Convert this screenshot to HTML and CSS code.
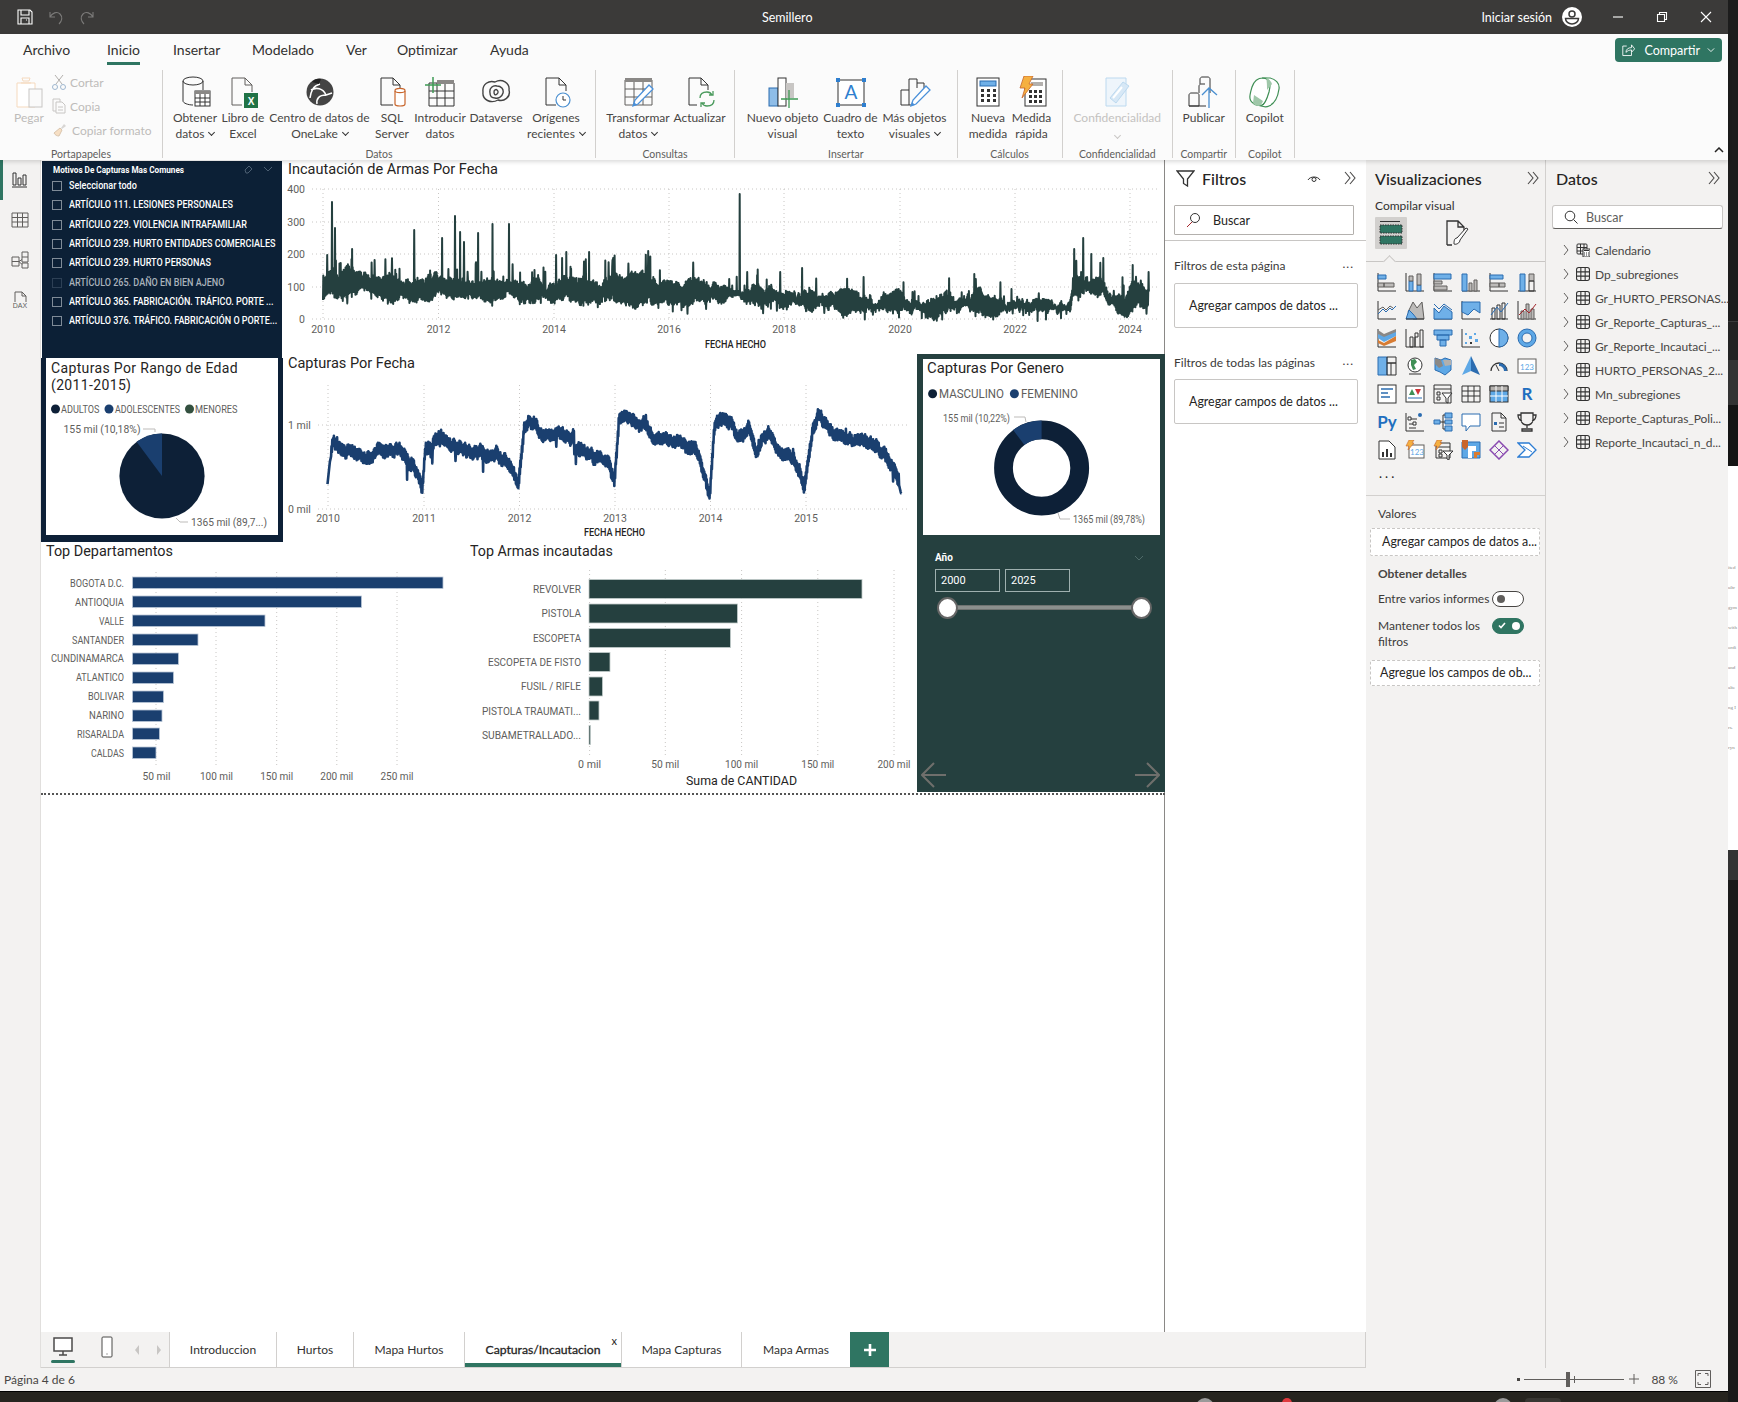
FILE: index.html
```html
<!DOCTYPE html>
<html lang="es">
<head>
<meta charset="utf-8">
<title>Semillero</title>
<link rel="stylesheet" href="styles.css">
</head>
<body>
<div class="app">
  <header class="titlebar">
    <div class="qat">
      <svg width="16" height="16" viewBox="0 0 16 16"><path class="tw" d="M1 1h12l2 2v12H1z M4 1v5h8V1 M4 15v-6h8v6 M9 11h1"/></svg>
      <svg width="16" height="16" viewBox="0 0 16 16"><path class="td" d="M2 3v5h5 M2 8c2-4 7-6 10-3s2 7-1 10"/></svg>
      <svg width="16" height="16" viewBox="0 0 16 16"><path class="td" d="M14 3v5H9 M14 8c-2-4-7-6-10-3s-2 7 1 10"/></svg>
    </div>
    <div class="doc-title">Semillero</div>
    <div class="signin">Iniciar sesión</div>
    <svg class="avatar" width="20" height="20" viewBox="0 0 20 20"><circle cx="10" cy="10" r="10" fill="#fff"/><circle cx="10" cy="7" r="3" fill="none" stroke="#3b3a39" stroke-width="1.5"/><path d="M3.500 11.500h13c0 3-3 5.500-6.500 5.500s-6.500-2.500-6.500-5.500z" fill="none" stroke="#3b3a39" stroke-width="1.500"/></svg>
    <div class="winctl">
      <svg width="12" height="12" viewBox="0 0 12 12"><path class="tw" d="M1 6h10"/></svg>
      <svg width="12" height="12" viewBox="0 0 12 12"><path class="tw" d="M1.500 3.500h7v7h-7z M3.500 3.500v-2h7v7h-2"/></svg>
      <svg width="12" height="12" viewBox="0 0 12 12"><path class="tw" d="M1 1l10 10 M11 1L1 11"/></svg>
    </div>
  </header>

  <section class="ribbon">
    <nav class="menu">
      <span class="m-archivo">Archivo</span>
      <span class="m-inicio active">Inicio</span>
      <span class="m-insertar">Insertar</span>
      <span class="m-modelado">Modelado</span>
      <span class="m-ver">Ver</span>
      <span class="m-optimizar">Optimizar</span>
      <span class="m-ayuda">Ayuda</span>
      <button class="share">
        <svg width="17" height="16" viewBox="0 0 17 16"><path class="tw" d="M6 3H1v12h11v-4 M5 11c0-4 3-6 7-6V1.500l4 5-4 4.500V8c-3 0-5 1-7 3z"/></svg>
        Compartir
        <svg width="10" height="6" viewBox="0 0 10 6"><path class="tw" d="M1 1l4 4 4-4"/></svg>
      </button>
    </nav>
    <div class="groups">
      <div class="rgroup g-clip">
        <div class="rbody clip-body">
          <div class="pegar">
            <svg width="28" height="32" viewBox="0 0 28 32"><path d="M2 7h18v24H2z" fill="#fff" stroke="#f5d9bd"/><path d="M8 5h6l1-3H7z M6 7h10" fill="none" stroke="#f5d9bd"/><rect x="14" y="13" width="13" height="18" fill="#fafafa" stroke="#c8c6c4"/></svg>
            <span>Pegar</span>
          </div>
          <ul class="clip-list">
            <li><svg width="14" height="16" viewBox="0 0 14 16"><path d="M3 1l7 9 M11 1L4 10" fill="none" stroke="#b3b0ad"/><circle cx="3" cy="13" r="2.500" fill="none" stroke="#9fb7cf"/><circle cx="11" cy="13" r="2.500" fill="none" stroke="#9fb7cf"/></svg>Cortar</li>
            <li><svg width="14" height="16" viewBox="0 0 14 16"><path d="M1 1h7v3 M1 1v12h3 M4 4h6l3 3v8H4z M6 9h5 M6 12h5" fill="none" stroke="#c8c6c4"/></svg>Copia</li>
            <li><svg width="16" height="16" viewBox="0 0 16 16"><path d="M9 6l3-4 2 2-4 3z" fill="#d8d6d4"/><path d="M2 11l6-5 2 2-3 6c-2 0-4-1-5-3z" fill="#f7dfc4" stroke="#d9c5ae"/></svg>Copiar formato</li>
          </ul>
        </div>
        <div class="rlabel">Portapapeles</div>
      </div>

      <div class="rgroup g-datos">
        <div class="rbody">
          <div class="ritem"><svg width="32" height="32" viewBox="0 0 32 32"><path class="s" d="M4 5v20c0 2 5 4 10 4 M24 5v9"/><ellipse class="s" cx="14" cy="5" rx="10" ry="4"/><rect x="16" y="15" width="15" height="15" fill="#fff" stroke="#333"/><path d="M16 15h15v3H16z" fill="#8a8886"/><path class="s" d="M21 18v12 M26 18v12 M16 22h15 M16 26h15"/></svg><span>Obtener<br>datos <i class="chev"></i></span></div>
          <div class="ritem"><svg width="32" height="32" viewBox="0 0 32 32"><path class="g1" d="M5 29V2h13l7 7v7 M18 2v7h7 M5 29h10"/><rect x="17" y="17" width="14" height="15" fill="#217346"/><text class="xl" x="24" y="29">X</text></svg><span>Libro de<br>Excel</span></div>
          <div class="ritem"><svg width="32" height="32" viewBox="0 0 32 32"><circle cx="16" cy="16" r="13.500" fill="#444"/><path d="M6 22c1-7 3-12 10-14 M7 14c5-3 12-2 15 5l6-2 M13 28c-1-5 2-9 9-9" fill="none" stroke="#fff" stroke-width="1.500"/><path d="M8 6c2-3 6-4 9-3l-2 5z" fill="#222"/></svg><span>Centro de datos de<br>OneLake <i class="chev"></i></span></div>
          <div class="ritem"><svg width="32" height="32" viewBox="0 0 32 32"><path class="s" d="M5 29V2h12l7 7v3 M17 2v7h7 M5 29h12"/><path d="M19 15v13c0 1 2 2 5 2s5-1 5-2V15" fill="#fff" stroke="#c8652b" stroke-width="1.200"/><ellipse cx="24" cy="14.500" rx="5" ry="2.200" fill="#fff" stroke="#c8652b" stroke-width="1.200"/></svg><span>SQL<br>Server</span></div>
          <div class="ritem"><svg width="32" height="32" viewBox="0 0 32 32"><path class="s" d="M5 7h25v23H5z M5 15h25 M5 22h25 M13 7v23 M21 7v23"/><path d="M13 4h17v4H13z" fill="#8a8886"/><path d="M9 1v16 M1 9h16" stroke="#3f9a55" stroke-width="1.500"/></svg><span>Introducir<br>datos</span></div>
          <div class="ritem"><svg width="32" height="32" viewBox="0 0 32 32"><path class="g2" d="M3 16C2 8 9 4 15 6c7-4 15 1 14 8 2 7-5 12-11 10-7 4-16 0-15-8z M10 17c-1-5 3-8 7-7 4 0 7 3 6 7-1 4-5 6-8 5-3 0-5-2-5-5z M14 16c0-2 2-3 3-2s2 2 0 4-3 0-3-2z"/></svg><span>Dataverse</span></div>
          <div class="ritem"><svg width="32" height="32" viewBox="0 0 32 32"><path class="s" d="M6 29V2h13l7 7v6 M19 2v7h7 M6 29h10"/><circle cx="23" cy="24" r="7" fill="#fff" stroke="#4a8fd0" stroke-width="1.200"/><path d="M23 20v4h3" fill="none" stroke="#333"/></svg><span>Orígenes<br>recientes <i class="chev"></i></span></div>
        </div>
        <div class="rlabel">Datos</div>
      </div>

      <div class="rgroup g-consultas">
        <div class="rbody">
          <div class="ritem"><svg width="32" height="32" viewBox="0 0 32 32"><path class="g1" d="M3 4h27v25H3z M3 13h27 M3 21h27 M12 4v25 M21 4v25"/><path d="M3 2h27v4H3z" fill="#8a8886"/><path d="M11 30l2-6 14-15 4 4-15 15z" fill="#fff" stroke="#4a90d9" stroke-width="1.300"/><path d="M11 30l1-4 3 3z" fill="#4a90d9"/></svg><span>Transformar<br>datos <i class="chev"></i></span></div>
          <div class="ritem"><svg width="32" height="32" viewBox="0 0 32 32"><path class="s" d="M5 29V2h12l7 7v5 M17 2v7h7 M5 29h8"/><path d="M16 22c0-4 3-6 7-6 2 0 4 1 5 3 M30 24c0 4-3 6-7 6-2 0-4-1-5-3 M29 15v4h-4 M17 31v-4h4" fill="none" stroke="#4a9a5c" stroke-width="1.300"/></svg><span>Actualizar</span></div>
        </div>
        <div class="rlabel">Consultas</div>
      </div>

      <div class="rgroup g-insertar">
        <div class="rbody">
          <div class="ritem"><svg width="32" height="32" viewBox="0 0 32 32"><rect x="2" y="12" width="9" height="18" fill="#8ebde8" stroke="#2b6cb0"/><rect x="11" y="2" width="8" height="28" fill="#fff" stroke="#333"/><rect x="19" y="7" width="8" height="15" fill="#c8c6c4"/><path d="M22 14v18 M14 23h17" stroke="#3f9a55" stroke-width="1.300"/></svg><span>Nuevo objeto<br>visual</span></div>
          <div class="ritem"><svg width="32" height="32" viewBox="0 0 32 32"><rect x="3" y="4" width="26" height="25" fill="#fff" stroke="#333"/><path d="M1 2h4v4H1z M27 2h4v4h-4z M1 27h4v4H1z M27 27h4v4h-4z" fill="#2f7fcf"/><text class="bigA" x="16" y="23">A</text></svg><span>Cuadro de<br>texto</span></div>
          <div class="ritem"><svg width="32" height="32" viewBox="0 0 32 32"><path class="s" d="M2 29V14h8 M10 29V3h8v9 M18 7h7v5 M2 29h10"/><path d="M12 30l2-6 13-14 4 4-14 14z" fill="#fff" stroke="#4a90d9" stroke-width="1.300"/><path d="M12 30l1-4 3 3z" fill="#4a90d9"/></svg><span>Más objetos<br>visuales <i class="chev"></i></span></div>
        </div>
        <div class="rlabel">Insertar</div>
      </div>

      <div class="rgroup g-calc">
        <div class="rbody">
          <div class="ritem"><svg width="32" height="32" viewBox="0 0 32 32"><rect x="5" y="2" width="22" height="28" fill="#fff" stroke="#333"/><rect x="8" y="5" width="16" height="5" fill="#6fb0e8" stroke="#2b6cb0"/><path d="M9 13h3v3H9z M15 13h3v3h-3z M21 13h3v3h-3z M9 18h3v3H9z M15 18h3v3h-3z M21 18h3v3h-3z M9 23h3v3H9z M15 23h3v3h-3z M21 23h3v3h-3z" fill="#333"/></svg><span>Nueva<br>medida</span></div>
          <div class="ritem"><svg width="32" height="32" viewBox="0 0 32 32"><rect x="9" y="3" width="21" height="27" fill="#fff" stroke="#333"/><rect x="15" y="6" width="12" height="4" fill="#b3b0ad"/><path d="M13 14h3v3h-3z M18 14h3v3h-3z M23 14h3v3h-3z M13 19h3v3h-3z M18 19h3v3h-3z M23 19h3v3h-3z M13 24h3v3h-3z M18 24h3v3h-3z M23 24h3v3h-3z" fill="#333"/><path d="M8 0h9l-4 8h4L6 22l3-10H4z" fill="#f5b041" stroke="#c8652b" stroke-width=".8"/></svg><span>Medida<br>rápida</span></div>
        </div>
        <div class="rlabel">Cálculos</div>
      </div>

      <div class="rgroup g-conf">
        <div class="rbody">
          <div class="ritem dim"><svg width="32" height="32" viewBox="0 0 32 32"><path d="M5 2h20v28H5z" fill="#eef5fb" stroke="#bcd9ef"/><path d="M9 22L22 6l6 4-13 17z" fill="#d7e8f6" stroke="#bcd9ef"/><path d="M12 22l9-11" stroke="#fff" stroke-width="2"/></svg><span>Confidencialidad<br><i class="chev light"></i></span></div>
        </div>
        <div class="rlabel">Confidencialidad</div>
      </div>

      <div class="rgroup g-comp">
        <div class="rbody">
          <div class="ritem"><svg width="32" height="32" viewBox="0 0 32 32"><path class="s" d="M1 30V19c0-1 1-2 2-2h6c1 0 2 1 2 2v11z M11 17V10c0-1 1-2 2-2h4M12 8V3c0-1 1-2 2-2h6c1 0 2 1 2 2v14 M1 30h17"/><path d="M21 32V12 M14 19l7-7 8 7" fill="none" stroke="#4a8fd0" stroke-width="1.300"/></svg><span>Publicar</span></div>
        </div>
        <div class="rlabel">Compartir</div>
      </div>

      <div class="rgroup g-copilot">
        <div class="rbody">
          <div class="ritem"><svg width="34" height="32" viewBox="0 0 34 32"><path d="M15 2c-6 0-9 3-11 9-2 7-4 13 1 16 2 2 6 3 9 2 4-1 6-7 8-13 1-4 2-9 0-12-1-2-4-2-7-2z" fill="#fff" stroke="#3f8f55" stroke-width="1.200"/><path d="M14 2h8c5 1 10 5 9 11-1 7-3 14-10 17-2 1-5 1-8 0 4-1 6-7 8-14 1-4 2-10-1-12-2-2-4-2-6-2z" fill="#fff" stroke="#3f8f55" stroke-width="1.200"/><path d="M18 2c3 1 5 3 6 6l-5 6c0-4 0-9-1-12z M5 27l1-8 9 6c-1 3-3 5-5 5-2-1-4-1-5-3z" fill="#9fc7a9"/></svg><span>Copilot</span></div>
        </div>
        <div class="rlabel">Copilot</div>
      </div>
    </div>
    <svg class="collapse" width="10" height="6" viewBox="0 0 10 6"><path d="M1 5l4-4 4 4" fill="none" stroke="#252423" stroke-width="1.500"/></svg>
  </section>

  <main class="main">
    <aside class="rail">
      <div class="rail-item on"><svg width="18" height="16" viewBox="0 0 18 16"><path class="s" d="M1 15h15 M2 13V1h3v12z M7 13V6h3v7z M12 13V3h3v10z"/></svg></div>
      <div class="rail-item"><svg width="18" height="16" viewBox="0 0 18 16"><path class="g1" d="M1 1h16v14H1z M1 5.500h16 M1 10h16 M6.500 1v14 M11.500 1v14"/></svg></div>
      <div class="rail-item"><svg width="18" height="18" viewBox="0 0 18 18"><path class="g1" d="M1 6h7v9H1z M1 10.500h7 M8 10.500l3-2 M11 1h6v5h-6z M11 6v5h6V6 M11 12h6v5h-6z M8 10.500l3 3"/></svg></div>
      <div class="rail-item"><svg width="18" height="19" viewBox="0 0 18 19"><path class="g1" d="M4 11V1h7l4 4v6 M11 1v4h4"/><text class="dax" x="9" y="17">DAX</text></svg></div>
    </aside>

    <div class="center">
      <div class="work">
        <div class="canvas">
          <section class="visual v-slicer">
            <h3 class="sl-title">Motivos De Capturas Mas Comunes</h3>
            <svg class="sl-tools" width="34" height="10" viewBox="0 0 34 10"><path d="M2 6l4-4 3 3-4 4H3z M21 3l4 4 4-4" fill="none" stroke="#4c5f72"/></svg>
            <ul class="sl-list">
              <li><i></i><span>Seleccionar todo</span></li>
              <li><i></i><span>ARTÍCULO 111. LESIONES PERSONALES</span></li>
              <li><i></i><span>ARTÍCULO 229. VIOLENCIA INTRAFAMILIAR</span></li>
              <li><i></i><span>ARTÍCULO 239. HURTO ENTIDADES COMERCIALES</span></li>
              <li><i></i><span>ARTÍCULO 239. HURTO PERSONAS</span></li>
              <li class="off"><i></i><span>ARTÍCULO 265. DAÑO EN BIEN AJENO</span></li>
              <li><i></i><span>ARTÍCULO 365. FABRICACIÓN. TRÁFICO. PORTE ...</span></li>
              <li><i></i><span>ARTÍCULO 376. TRÁFICO. FABRICACIÓN O PORTE...</span></li>
            </ul>
          </section>

          <svg class="visual v-line1" viewBox="287 160 878 195" width="878" height="195">
            <text class="vt" x="288" y="174" textLength="210" lengthAdjust="spacingAndGlyphs">Incautación de Armas Por Fecha</text>
            <g class="grid">
              <path d="M312 189H1158 M312 222H1158 M312 254H1158 M312 287H1158 M312 319H1158"/>
              <path d="M323 189V319 M438.500 189V319 M554 189V319 M669 189V319 M784 189V319 M900 189V319 M1015 189V319 M1130 189V319"/>
            </g>
            <g class="ax end">
              <text x="305" y="193">400</text><text x="305" y="226">300</text><text x="305" y="258">200</text><text x="305" y="291">100</text><text x="305" y="323">0</text>
            </g>
            <g class="ax mid">
              <text x="323" y="333">2010</text><text x="438.500" y="333">2012</text><text x="554" y="333">2014</text><text x="669" y="333">2016</text><text x="784" y="333">2018</text><text x="900" y="333">2020</text><text x="1015" y="333">2022</text><text x="1130" y="333">2024</text>
            </g>
            <path id="series1" class="line1" d=""/>
            <text class="axt" x="705" y="348" textLength="61" lengthAdjust="spacingAndGlyphs">FECHA HECHO</text>
          </svg>

          <section class="visual v-pie">
            <h3 class="vt-html">Capturas Por Rango de Edad<br>(2011-2015)</h3>
            <svg class="pie-svg" viewBox="46 358 232 177" width="232" height="177">
              <circle cx="55.500" cy="409" r="4.500" fill="#0d2037"/><text class="lg" x="61" y="413" textLength="38.500" lengthAdjust="spacingAndGlyphs">ADULTOS</text>
              <circle cx="109" cy="409" r="4.500" fill="#1a3f6f"/><text class="lg" x="115" y="413" textLength="65" lengthAdjust="spacingAndGlyphs">ADOLESCENTES</text>
              <circle cx="189.500" cy="409" r="4.500" fill="#33503f"/><text class="lg" x="195" y="413" textLength="42.500" lengthAdjust="spacingAndGlyphs">MENORES</text>
              <text class="lb" x="63.500" y="433" textLength="77" lengthAdjust="spacingAndGlyphs">155 mil (10,18%)</text>
              <path class="lead" d="M143 429h12v3"/>
              <circle cx="162" cy="476" r="42.600" fill="#0d2037"/>
              <path d="M162 476V433.400A42.600 42.600 0 0 0 136.600 441.800Z" fill="#1a3f6f"/>
              <path class="lead" d="M176 518l4 4h8"/>
              <text class="lb" x="191" y="526" textLength="76" lengthAdjust="spacingAndGlyphs">1365 mil (89,7...)</text>
            </svg>
          </section>

          <svg class="visual v-line2" viewBox="287 355 630 190" width="630" height="190">
            <text class="vt" x="288" y="368" textLength="127" lengthAdjust="spacingAndGlyphs">Capturas Por Fecha</text>
            <g class="grid">
              <path d="M318 425H908 M318 509H908"/>
              <path d="M328 385V509 M424 385V509 M519.500 385V509 M615 385V509 M710.500 385V509 M806 385V509"/>
            </g>
            <g class="ax">
              <text x="288" y="429">1 mil</text><text x="288" y="513">0 mil</text>
            </g>
            <g class="ax mid">
              <text x="328" y="522">2010</text><text x="424" y="522">2011</text><text x="519.500" y="522">2012</text><text x="615" y="522">2013</text><text x="710.500" y="522">2014</text><text x="806" y="522">2015</text>
            </g>
            <path id="series2" class="line2" d=""/>
            <text class="axt" x="584" y="536" textLength="61" lengthAdjust="spacingAndGlyphs">FECHA HECHO</text>
          </svg>

          <section class="visual v-bar1">
            <svg viewBox="41 542 419 251" width="419" height="251">
              <text class="vt" x="46" y="556" textLength="127" lengthAdjust="spacingAndGlyphs">Top Departamentos</text>
              <path class="grid-p" d="M156 572V768 M216 572V768 M276.700 572V768 M336.800 572V768 M397 572V768"/>
              <g class="bars1">
                <rect x="132.500" y="577" width="310.500" height="11.500"/><rect x="132.500" y="596" width="229" height="11.500"/><rect x="132.500" y="615" width="132.500" height="11.500"/><rect x="132.500" y="634" width="65.500" height="11.500"/><rect x="132.500" y="653" width="46" height="11.500"/><rect x="132.500" y="672" width="41" height="11.500"/><rect x="132.500" y="691" width="31" height="11.500"/><rect x="132.500" y="710" width="29.500" height="11.500"/><rect x="132.500" y="728" width="27" height="11.500"/><rect x="132.500" y="747" width="23.500" height="11.500"/>
              </g>
              <g class="ax end">
                <text x="124" y="587" textLength="54" lengthAdjust="spacingAndGlyphs">BOGOTA D.C.</text><text x="124" y="606" textLength="49" lengthAdjust="spacingAndGlyphs">ANTIOQUIA</text><text x="124" y="625" textLength="25" lengthAdjust="spacingAndGlyphs">VALLE</text><text x="124" y="644" textLength="52" lengthAdjust="spacingAndGlyphs">SANTANDER</text><text x="124" y="662" textLength="73" lengthAdjust="spacingAndGlyphs">CUNDINAMARCA</text><text x="124" y="681" textLength="48" lengthAdjust="spacingAndGlyphs">ATLANTICO</text><text x="124" y="700" textLength="36" lengthAdjust="spacingAndGlyphs">BOLIVAR</text><text x="124" y="719" textLength="35" lengthAdjust="spacingAndGlyphs">NARINO</text><text x="124" y="738" textLength="47" lengthAdjust="spacingAndGlyphs">RISARALDA</text><text x="124" y="757" textLength="33" lengthAdjust="spacingAndGlyphs">CALDAS</text>
              </g>
              <g class="ax mid">
                <text x="156.500" y="780" textLength="28" lengthAdjust="spacingAndGlyphs">50 mil</text><text x="216.500" y="780" textLength="33" lengthAdjust="spacingAndGlyphs">100 mil</text><text x="276.700" y="780" textLength="33" lengthAdjust="spacingAndGlyphs">150 mil</text><text x="336.800" y="780" textLength="33" lengthAdjust="spacingAndGlyphs">200 mil</text><text x="397" y="780" textLength="33" lengthAdjust="spacingAndGlyphs">250 mil</text>
              </g>
            </svg>
          </section>

          <section class="visual v-bar2">
            <svg viewBox="460 542 457 251" width="457" height="251">
              <text class="vt" x="470" y="556" textLength="143" lengthAdjust="spacingAndGlyphs">Top Armas incautadas</text>
              <path class="grid-p" d="M589.600 570V755 M665.300 570V755 M741.600 570V755 M817.800 570V755 M894 570V755"/>
              <g class="bars2">
                <rect x="589" y="579.500" width="273" height="19"/><rect x="589" y="604" width="148.500" height="19"/><rect x="589" y="628.500" width="141.500" height="19"/><rect x="589" y="652.500" width="21" height="19"/><rect x="589" y="677" width="13.500" height="19"/><rect x="589" y="701" width="10" height="19"/><rect x="589" y="725.500" width="1.500" height="19"/>
              </g>
              <g class="ax end">
                <text x="581" y="593" textLength="48" lengthAdjust="spacingAndGlyphs">REVOLVER</text><text x="581" y="617" textLength="39.500" lengthAdjust="spacingAndGlyphs">PISTOLA</text><text x="581" y="642" textLength="48" lengthAdjust="spacingAndGlyphs">ESCOPETA</text><text x="581" y="666" textLength="93" lengthAdjust="spacingAndGlyphs">ESCOPETA DE FISTO</text><text x="581" y="690" textLength="60" lengthAdjust="spacingAndGlyphs">FUSIL / RIFLE</text><text x="581" y="715" textLength="99" lengthAdjust="spacingAndGlyphs">PISTOLA TRAUMATI...</text><text x="581" y="739" textLength="99" lengthAdjust="spacingAndGlyphs">SUBAMETRALLADO...</text>
              </g>
              <g class="ax mid">
                <text x="589.600" y="768" textLength="23" lengthAdjust="spacingAndGlyphs">0 mil</text><text x="665.300" y="768" textLength="28" lengthAdjust="spacingAndGlyphs">50 mil</text><text x="741.600" y="768" textLength="33" lengthAdjust="spacingAndGlyphs">100 mil</text><text x="817.800" y="768" textLength="33" lengthAdjust="spacingAndGlyphs">150 mil</text><text x="894" y="768" textLength="33" lengthAdjust="spacingAndGlyphs">200 mil</text>
              </g>
              <text class="axs" x="741.500" y="785" textLength="111" lengthAdjust="spacingAndGlyphs">Suma de CANTIDAD</text>
            </svg>
          </section>

          <section class="visual v-gender">
            <div class="gcard">
              <svg viewBox="923 359 237 176" width="237" height="176">
                <text class="vt" x="927" y="373" textLength="137" lengthAdjust="spacingAndGlyphs">Capturas Por Genero</text>
                <circle cx="932.600" cy="393.700" r="4.500" fill="#0d2037"/><text class="lg2" x="939" y="398" textLength="65" lengthAdjust="spacingAndGlyphs">MASCULINO</text>
                <circle cx="1014.400" cy="393.700" r="4.500" fill="#1a3f6f"/><text class="lg2" x="1021" y="398" textLength="57" lengthAdjust="spacingAndGlyphs">FEMENINO</text>
                <text class="lb small" x="943" y="421.500" textLength="67" lengthAdjust="spacingAndGlyphs">155 mil (10,22%)</text>
                <path class="lead" d="M1014 417h11l1 5"/>
                <circle cx="1041.600" cy="468" r="38.100" fill="none" stroke="#0d2037" stroke-width="18.800"/>
                <path d="M1041.600 420.500A47.500 47.500 0 0 0 1013.150 430L1024.400 445A28.700 28.700 0 0 1 1041.600 439.300Z" fill="#1a3f6f"/>
                <path class="lead" d="M1058 513l2 6h10"/>
                <text class="lb small" x="1073" y="523" textLength="72" lengthAdjust="spacingAndGlyphs">1365 mil (89,78%)</text>
              </svg>
            </div>
            <div class="range">
              <div class="range-head"><span>Año</span><svg width="10" height="6" viewBox="0 0 10 6"><path d="M1 1l4 4 4-4" fill="none" stroke="#4f6a69"/></svg></div>
              <div class="range-inputs"><span>2000</span><span>2025</span></div>
              <div class="slider"><i></i><i></i></div>
            </div>
            <div class="pager">
              <svg width="26" height="26" viewBox="0 0 26 26"><path d="M25 13H2 M13 1L1 13l12 12" fill="none" stroke="#6f6f6c" stroke-width="2"/></svg>
              <svg width="26" height="26" viewBox="0 0 26 26"><path d="M1 13h23 M13 1l12 12-12 12" fill="none" stroke="#6f6f6c" stroke-width="2"/></svg>
            </div>
          </section>

          <div class="visual v-dots"></div>
        </div>

        <aside class="filters">
          <div class="pane-head">
            <svg width="19" height="17" viewBox="0 0 19 17"><path class="s2" d="M1 1h17l-6.500 8v7l-4-2.500V9z"/></svg>
            <h2>Filtros</h2>
            <svg class="eye" width="14" height="10" viewBox="0 0 14 10"><path class="s" d="M1 7c2-4 10-4 12 0"/><circle class="s" cx="7" cy="6.500" r="2"/></svg>
            <svg width="14" height="14" viewBox="0 0 14 14"><path d="M2 1l5 6-5 6 M7 1l5 6-5 6" fill="none" stroke="#4b4a49" stroke-width="1.100"/></svg>
          </div>
          <div class="f-search">
            <svg width="16" height="16" viewBox="0 0 16 16"><circle class="s" cx="10" cy="6" r="4.500"/><path d="M7 10l-5 5" stroke="#a4262c"/></svg>
            <span>Buscar</span>
          </div>
          <div class="f-sect"><span>Filtros de esta página</span><b>...</b></div>
          <div class="f-card">Agregar campos de datos ...</div>
          <div class="f-sect second"><span>Filtros de todas las páginas</span><b>...</b></div>
          <div class="f-card">Agregar campos de datos ...</div>
        </aside>
      </div>

      <nav class="pagetabs">
        <div class="tab-tools">
          <svg class="dev on" width="20" height="20" viewBox="0 0 20 20"><rect x="1" y="1" width="18" height="13" fill="#fff" stroke="#4b4a49" stroke-width="1.500"/><path d="M10 14v4 M6 18h8" stroke="#4b4a49" stroke-width="1.500"/></svg>
          <svg class="dev" width="12" height="22" viewBox="0 0 12 22"><rect x="1" y="1" width="10" height="20" rx="1" fill="#fff" stroke="#4b4a49"/><path d="M5.500 18h1" stroke="#4b4a49"/></svg>
          <svg class="arr" width="6" height="10" viewBox="0 0 6 10"><path d="M5 0L1 5l4 5z" fill="#c8c6c4"/></svg>
          <svg class="arr" width="6" height="10" viewBox="0 0 6 10"><path d="M1 0l4 5-4 5z" fill="#c8c6c4"/></svg>
        </div>
        <div class="tab">Introduccion</div>
        <div class="tab">Hurtos</div>
        <div class="tab">Mapa Hurtos</div>
        <div class="tab current">Capturas/Incautacion<em>x</em></div>
        <div class="tab">Mapa Capturas</div>
        <div class="tab">Mapa Armas</div>
        <div class="tab-add"><svg width="12" height="12" viewBox="0 0 12 12"><path d="M6 0v12 M0 6h12" stroke="#fff" stroke-width="2.600"/></svg></div>
      </nav>
    </div>

    <aside class="viz">
      <div class="pane-head"><h2>Visualizaciones</h2><svg width="14" height="14" viewBox="0 0 14 14"><path d="M2 1l5 6-5 6 M7 1l5 6-5 6" fill="none" stroke="#4b4a49" stroke-width="1.100"/></svg></div>
      <div class="viz-sub">Compilar visual</div>
      <div class="viz-modes">
        <span class="mode on"><svg width="24" height="26" viewBox="0 0 24 26"><path d="M1 1.500h20" stroke="#333"/><rect x="1" y="5" width="22" height="8" fill="#2f7562" stroke="#333" stroke-dasharray="1.500 1"/><rect x="1" y="16" width="22" height="8" fill="#2f7562" stroke="#333" stroke-dasharray="1.500 1"/></svg></span>
        <span class="mode"><svg width="26" height="26" viewBox="0 0 26 26"><path class="s2" d="M3 25V1h11l6 6v6 M14 1v6h6 M3 25h5"/><path d="M10 24c2 1 6-1 6-4l8-11-2-1-9 10c-3 0-3 4-3 6z" fill="#fff" stroke="#333"/></svg></span>
      </div>
      <div class="viz-rule"><i></i></div>
      <div class="viz-grid">
        <svg viewBox="0 0 20 20"><path class="s" d="M1 1v18h18"/><path class="b" d="M1 3h8v4H1z"/><path class="g" d="M1 11h6v4H1zM7 11h10v4H7z"/></svg>
        <svg viewBox="0 0 20 20"><path class="s" d="M1 1v18h18"/><path class="b" d="M4 9h4v10H4z M12 13h4v6h-4z"/><path class="g" d="M4 4h4v5H4z M12 2h4v11h-4z"/></svg>
        <svg viewBox="0 0 20 20"><path class="s" d="M1 1v18h18"/><path class="b" d="M1 2h17v5H1z"/><path class="g" d="M1 9h8v3H1z M1 14h13v4H1z"/></svg>
        <svg viewBox="0 0 20 20"><path class="s" d="M1 19h18"/><path class="b" d="M1 2h5v17H1z"/><path class="g" d="M8 11h3v8H8z M13 8h3v11h-3z"/></svg>
        <svg viewBox="0 0 20 20"><path class="s" d="M1 1v18h18"/><path class="b" d="M1 3h13v4H1z"/><path class="g" d="M1 11h9v4H1z M10 11h6v4h-6z"/></svg>
        <svg viewBox="0 0 20 20"><path class="s" d="M1 19h18"/><path class="b" d="M3 2h5v17H3z"/><path class="g" d="M12 2h5v7h-5z"/><path class="s" d="M12 9h5v10h-5z"/></svg>

        <svg viewBox="0 0 20 20"><path class="s" d="M1 1v18h18"/><path d="M1 14l5-5 3 3 4-4 2 2 4-4" fill="none" stroke="#2b6cb0"/><path d="M1 10l5-3 3 3 4-4 3 2" fill="none" stroke="#605e5c"/></svg>
        <svg viewBox="0 0 20 20"><path class="g" d="M3 12l5-10 4 6 5-6 2 17H8z"/><path class="b" d="M1 19l3-9 4 4 4 5z"/><path class="s" d="M1 19h18"/></svg>
        <svg viewBox="0 0 20 20"><path class="s" d="M1 19h18"/><path class="b" d="M1 8l5 5 5-7 8 6v7H1z"/><path d="M1 4l5 5 5-5 8 6" fill="none" stroke="#2b6cb0"/></svg>
        <svg viewBox="0 0 20 20"><path class="s" d="M1 1v18h18"/><path class="b" d="M1 2h18v11l-6-4-6 6-6-3z"/></svg>
        <svg viewBox="0 0 20 20"><path class="s" d="M1 19h18 M3 19V8h3v11z M8 19V5h3v14z M13 19V3h3v16z"/><path d="M2 15l6-8 4 5 7-9" fill="none" stroke="#2b6cb0"/></svg>
        <svg viewBox="0 0 20 20"><path class="s" d="M1 1v18h18"/><path class="g" d="M4 11h3v8H4z M9 4h3v15H9z M14 9h3v10h-3z"/><path d="M2 15l6-6 4 4 7-9" fill="none" stroke="#a4262c"/></svg>

        <svg viewBox="0 0 20 20"><path class="s" d="M1 1v18h18"/><path d="M1 6l6 2 12-6v6L7 14 1 10z" fill="#5ea8e6"/><path d="M1 12l6 3 12-7v5l-12 5-6-3z" fill="#d87c33"/><path d="M1 2l6 4 12-5v3L7 9 1 6z" fill="#8a8886"/></svg>
        <svg viewBox="0 0 20 20"><path class="s" d="M1 1v18h18 M5 19V9h3v10z M10 19V5h3v4h-3z M15 19V2h3v17z"/></svg>
        <svg viewBox="0 0 20 20"><path class="b" d="M1 2h18v5H1z M4 7h12v5H4z M7 12h6v6H7z"/></svg>
        <svg viewBox="0 0 20 20"><path class="s" d="M1 1v18h18"/><path d="M4 14h2v2H4z M8 8h3v3H8z M13 5h2v2h-2z M14 11h3v3h-3z M4 5h2v2H4z" fill="#5ea8e6"/><path d="M9 14h2v2H9z" fill="#333"/></svg>
        <svg viewBox="0 0 20 20"><circle cx="10" cy="10" r="9" fill="#fff" stroke="#333"/><path class="b" d="M10 10V1a9 9 0 0 1 0 18z"/></svg>
        <svg viewBox="0 0 20 20"><circle cx="10" cy="10" r="7" fill="none" stroke="#5ea8e6" stroke-width="4"/><circle cx="10" cy="10" r="9" fill="none" stroke="#2b6cb0"/><circle cx="10" cy="10" r="5" fill="none" stroke="#2b6cb0"/></svg>

        <svg viewBox="0 0 20 20"><path class="b" d="M1 1h9v18H1z"/><path class="s" d="M10 1h9v6h-9z M10 7h9v12h-9z M14 7v12"/></svg>
        <svg viewBox="0 0 20 20"><circle cx="10" cy="9" r="7" fill="#fff" stroke="#333"/><path d="M6 4l4-1 2 3-3 3 2 4-3 1-2-5z" fill="#3f8f55"/><path d="M4 18h12" stroke="#333"/></svg>
        <svg viewBox="0 0 20 20"><path d="M2 2l6 2 4-2 6 2v10l-6 5-5-3-5-2z" fill="#5ea8e6" stroke="#2b6cb0"/><path d="M2 2l6 2 2 6-4 2-4-4z" fill="#8a8886"/><path d="M10 4l8 0v5l-6 1z" fill="#b3b0ad"/></svg>
        <svg viewBox="0 0 20 20"><path d="M10 0l-9 19 9-4z" fill="#5ea8e6"/><path d="M10 0l9 19-9-4z" fill="#2b6cb0"/></svg>
        <svg viewBox="0 0 20 20"><path class="s2" d="M2 15a8 8 0 0 1 16 0"/><path d="M10 7a8 8 0 0 1 8 8h-3a5 5 0 0 0-5-5z" fill="#2b6cb0"/><path d="M10 15L7 9" stroke="#333"/></svg>
        <svg viewBox="0 0 20 20"><rect x="1" y="3" width="18" height="14" fill="#fff" stroke="#605e5c"/><text class="t123" x="10" y="14">123</text></svg>

        <svg viewBox="0 0 20 20"><rect x="1" y="1" width="18" height="18" fill="#fff" stroke="#333"/><path d="M4 5h12 M4 9h7 M4 13h9" stroke="#2b6cb0" stroke-width="1.500"/></svg>
        <svg viewBox="0 0 20 20"><rect x="1" y="2" width="18" height="16" fill="#fff" stroke="#333"/><path d="M4 11l3-6 3 6z" fill="#3f8f55"/><path d="M10 5h6l-3 6z" fill="#d13438"/><path d="M3 14h14" stroke="#2b6cb0"/></svg>
        <svg viewBox="0 0 20 20"><path class="s" d="M1 1h17v18H1z M1 5h17 M4 8h3v3H4z M4 13h3v3H4z"/><path d="M9 9h10l-4 5v5l-2-1v-4z" fill="#fff" stroke="#333"/></svg>
        <svg viewBox="0 0 20 20"><path class="s" d="M1 2h18v16H1z M1 7h18 M1 12h18 M7 2v16 M13 2v16"/></svg>
        <svg viewBox="0 0 20 20"><rect x="1" y="2" width="18" height="16" fill="#5ea8e6" stroke="#333"/><path d="M1 2h18v5H1z" fill="#b3b0ad" stroke="#333"/><path d="M7 2v16 M13 2v16 M1 12h18" stroke="#fff"/></svg>
        <span class="lang-r">R</span>

        <span class="lang-py">Py</span>
        <svg viewBox="0 0 20 20"><path class="s" d="M1 1v18h18 M4 7h8 M4 12h5 M4 16h7"/><circle cx="15" cy="3" r="2" fill="#2b6cb0"/><path d="M3 5h3v3H3z M8 10h3v3H8z" fill="#fff" stroke="#333"/></svg>
        <svg viewBox="0 0 20 20"><path class="b" d="M1 8h6v4H1z M12 1h7v5h-7z M12 8h7v4h-7z M12 14h7v5h-7z"/><path class="s" d="M7 10h5 M10 3v14h2 M10 3h2"/></svg>
        <svg viewBox="0 0 20 20"><path d="M1 2h18v12H9l-4 5v-5H1z" fill="#fff" stroke="#2b6cb0"/></svg>
        <svg viewBox="0 0 20 20"><path class="s" d="M3 1h9l5 5v13H3z M12 1v5h5 M6 11h2 M10 11h5 M10 15h5"/><path d="M5 10h3v3H5z" fill="#2b6cb0"/></svg>
        <svg viewBox="0 0 20 20"><path class="s2" d="M4 1h12v7c0 3-3 5-6 5S4 11 4 8z M4 3H1c0 3 1 5 4 6 M16 3h3c0 3-1 5-4 6 M10 13v3 M5 19h10v-2H5z"/></svg>

        <svg viewBox="0 0 20 20"><path d="M2 19V1h10l6 6v12z" fill="#fff" stroke="#333"/><path d="M5 12h2v5H5z M9 9h2v8H9z M13 13h2v4h-2z" fill="#333"/></svg>
        <svg viewBox="0 0 20 20"><rect x="4" y="5" width="15" height="13" fill="#fff" stroke="#605e5c"/><text class="t123" x="12" y="15">123</text><path d="M4 0h5L7 3h2L3 10l1-4H1z" fill="#f5b041" stroke="#c8652b" stroke-width=".6"/></svg>
        <svg viewBox="0 0 20 20"><path class="s" d="M3 3h14v15H3z M3 7h14 M6 10h3v3H6z M6 14h3v3H6z"/><path d="M10 11h10l-4 4v5l-2-1v-4z" fill="#fff" stroke="#333"/><path d="M4 0h5L7 3h2L3 10l1-4H1z" fill="#f5b041" stroke="#c8652b" stroke-width=".6"/></svg>
        <svg viewBox="0 0 20 20"><path d="M1 2h18v16H1z" fill="#5ea8e6" stroke="#2b6cb0"/><path d="M7 6h8v5h-4v7H7z" fill="#fff"/><path d="M1 0h6v7l-3 3-3-3z" fill="#c8652b"/><path d="M13 12h6v3h-3v3h-3z" fill="#d87c33"/></svg>
        <svg viewBox="0 0 20 20"><path d="M10 1l9 9-9 9-9-9z" fill="none" stroke="#8a4ab0" stroke-width="1.500"/><path d="M5 5l10 10 M15 5L5 15" stroke="#8a4ab0"/></svg>
        <svg viewBox="0 0 20 20"><path d="M1 3h11l7 7-7 7H1l7-7z" fill="#fff" stroke="#2b7cd3" stroke-width="1.300"/><path d="M6 6l9 6" stroke="#2b7cd3"/></svg>

        <span class="more">...</span>
      </div>
      <div class="viz-rule2"></div>
      <div class="well-label">Valores</div>
      <div class="well">Agregar campos de datos a...</div>
      <div class="well-title">Obtener detalles</div>
      <div class="toggle-row"><span>Entre varios informes</span><i class="tg"></i></div>
      <div class="toggle-row two"><span>Mantener todos los filtros</span><i class="tg tg-on"><svg width="8" height="7" viewBox="0 0 8 7"><path d="M1 3.500l2 2 4-4.500" fill="none" stroke="#fff" stroke-width="1.600"/></svg></i></div>
      <div class="well w2">Agregue los campos de ob...</div>
    </aside>

    <aside class="data">
      <div class="pane-head"><h2>Datos</h2><svg width="14" height="14" viewBox="0 0 14 14"><path d="M2 1l5 6-5 6 M7 1l5 6-5 6" fill="none" stroke="#4b4a49" stroke-width="1.100"/></svg></div>
      <div class="d-search"><svg width="14" height="14" viewBox="0 0 14 14"><circle class="s" cx="6" cy="6" r="4.800"/><path class="s" d="M9.500 9.500l4 4"/></svg><span>Buscar</span></div>
      <ul class="d-list">
        <li><svg class="tree" width="6" height="10" viewBox="0 0 6 10"><path d="M1 0l4 5-4 5" fill="none" stroke="#605e5c"/></svg><svg class="tbl" width="14" height="14" viewBox="0 0 14 14"><rect class="s" x="1" y="1" width="10" height="10" rx="1"/><path class="s" d="M1 4.500h10 M1 8h10 M4.500 1v10 M8 1v10"/><rect x="7" y="6" width="7" height="8" fill="#fff" stroke="#333"/><path d="M8 7.500h5 M8 10h1 M10 10h1 M12 10h1 M8 12h1 M10 12h1 M12 12h1" stroke="#333"/></svg>Calendario</li>
        <li><svg class="tree" width="6" height="10" viewBox="0 0 6 10"><path d="M1 0l4 5-4 5" fill="none" stroke="#605e5c"/></svg><svg class="tbl" width="13" height="13" viewBox="0 0 13 13"><rect class="s" x=".5" y=".5" width="12" height="12" rx="2"/><path class="s" d="M.5 4.500h12 M.5 8.500h12 M4.500 .5v12 M8.500 .5v12"/></svg>Dp_subregiones</li>
        <li><svg class="tree" width="6" height="10" viewBox="0 0 6 10"><path d="M1 0l4 5-4 5" fill="none" stroke="#605e5c"/></svg><svg class="tbl" width="13" height="13" viewBox="0 0 13 13"><rect class="s" x=".5" y=".5" width="12" height="12" rx="2"/><path class="s" d="M.5 4.500h12 M.5 8.500h12 M4.500 .5v12 M8.500 .5v12"/></svg>Gr_HURTO_PERSONAS...</li>
        <li><svg class="tree" width="6" height="10" viewBox="0 0 6 10"><path d="M1 0l4 5-4 5" fill="none" stroke="#605e5c"/></svg><svg class="tbl" width="13" height="13" viewBox="0 0 13 13"><rect class="s" x=".5" y=".5" width="12" height="12" rx="2"/><path class="s" d="M.5 4.500h12 M.5 8.500h12 M4.500 .5v12 M8.500 .5v12"/></svg>Gr_Reporte_Capturas_...</li>
        <li><svg class="tree" width="6" height="10" viewBox="0 0 6 10"><path d="M1 0l4 5-4 5" fill="none" stroke="#605e5c"/></svg><svg class="tbl" width="13" height="13" viewBox="0 0 13 13"><rect class="s" x=".5" y=".5" width="12" height="12" rx="2"/><path class="s" d="M.5 4.500h12 M.5 8.500h12 M4.500 .5v12 M8.500 .5v12"/></svg>Gr_Reporte_Incautaci_...</li>
        <li><svg class="tree" width="6" height="10" viewBox="0 0 6 10"><path d="M1 0l4 5-4 5" fill="none" stroke="#605e5c"/></svg><svg class="tbl" width="13" height="13" viewBox="0 0 13 13"><rect class="s" x=".5" y=".5" width="12" height="12" rx="2"/><path class="s" d="M.5 4.500h12 M.5 8.500h12 M4.500 .5v12 M8.500 .5v12"/></svg>HURTO_PERSONAS_2...</li>
        <li><svg class="tree" width="6" height="10" viewBox="0 0 6 10"><path d="M1 0l4 5-4 5" fill="none" stroke="#605e5c"/></svg><svg class="tbl" width="13" height="13" viewBox="0 0 13 13"><rect class="s" x=".5" y=".5" width="12" height="12" rx="2"/><path class="s" d="M.5 4.500h12 M.5 8.500h12 M4.500 .5v12 M8.500 .5v12"/></svg>Mn_subregiones</li>
        <li><svg class="tree" width="6" height="10" viewBox="0 0 6 10"><path d="M1 0l4 5-4 5" fill="none" stroke="#605e5c"/></svg><svg class="tbl" width="13" height="13" viewBox="0 0 13 13"><rect class="s" x=".5" y=".5" width="12" height="12" rx="2"/><path class="s" d="M.5 4.500h12 M.5 8.500h12 M4.500 .5v12 M8.500 .5v12"/></svg>Reporte_Capturas_Poli...</li>
        <li><svg class="tree" width="6" height="10" viewBox="0 0 6 10"><path d="M1 0l4 5-4 5" fill="none" stroke="#605e5c"/></svg><svg class="tbl" width="13" height="13" viewBox="0 0 13 13"><rect class="s" x=".5" y=".5" width="12" height="12" rx="2"/><path class="s" d="M.5 4.500h12 M.5 8.500h12 M4.500 .5v12 M8.500 .5v12"/></svg>Reporte_Incautaci_n_d...</li>
      </ul>
    </aside>
  </main>

  <footer class="status">
    <span>Página 4 de 6</span>
    <div class="zoomer">
      <i class="zm"></i>
      <div class="ztrack"><b></b><u></u></div>
      <svg width="10" height="10" viewBox="0 0 10 10"><path d="M5 0v10 M0 5h10" stroke="#605e5c"/></svg>
      <span class="zpct">88 %</span>
      <svg class="zfit" width="16" height="18" viewBox="0 0 16 18"><path d="M.5.500h15v17H.5z" fill="none" stroke="#605e5c"/><path d="M3 6V3.500h3 M10 3.500h3V6 M3 12v2.500h3 M10 14.500h3V12" fill="none" stroke="#605e5c"/></svg>
    </div>
  </footer>
  <div class="taskbar">
    <i class="tk tk1"></i><i class="tk tk2"></i><i class="tk tk3"></i><i class="tk tk4"></i>
  </div>
</div>

<div class="edge">
  <div class="e1"></div>
  <div class="e2"></div>
  <div class="e3"></div>
  <div class="e4"></div>
  <div class="e5"><small>ited</small><small>ultr</small><small>gym</small><small>with</small><small>ordi</small><small>and</small><small>alte</small><small>ng I</small><small>rs.</small><small>ryn</small></div>
  <div class="e6"></div>
  <div class="e7"></div>
</div>
<script src="charts.js"></script>
</body>
</html>
```

FILE: styles.css
```css
* { box-sizing: border-box; }
html, body { margin: 0; padding: 0; }
body { width: 1738px; height: 1402px; overflow: hidden; display: flex; background: #1c1b1a; font-family: "Lato", "Open Sans", sans-serif; color: #252423; font-size: 12px; }
ul { list-style: none; margin: 0; padding: 0; }
h2, h3 { margin: 0; font-weight: 400; }
i, em { font-style: normal; display: block; }
button { font: inherit; border: 0; }

/* svg helpers */
.tw { fill: none; stroke: #fff; stroke-width: 1.100; }
.td { fill: none; stroke: #7c7b7a; stroke-width: 1.100; }
.s { fill: none; stroke: #333; stroke-width: 1; }
.s2 { fill: none; stroke: #333; stroke-width: 1.300; }
.g1 { fill: none; stroke: #605e5c; stroke-width: 1; }
.g2 { fill: none; stroke: #444; stroke-width: 1.400; }
.b { fill: #6fb0e8; stroke: #2b6cb0; stroke-width: 1; }
.g { fill: #bdbbb9; stroke: #605e5c; stroke-width: 1; }
.xl { font: 700 10px "Liberation Sans", sans-serif; fill: #fff; text-anchor: middle; }
.bigA { font: 400 19px "Lato", sans-serif; fill: #2f7fcf; text-anchor: middle; }
.dax { font: 400 7px "Liberation Sans", sans-serif; fill: #605e5c; text-anchor: middle; }
.t123 { font: 400 8px "Lato", sans-serif; fill: #5ea8e6; text-anchor: middle; }
.lang-r { color: #1f6fbf; font: 700 17px/20px "Lato", sans-serif; text-align: center; }
.lang-py { color: #1f6fbf; font: 700 17px/20px "Lato", sans-serif; text-align: center; white-space: nowrap; }

/* app shell */
.app { width: 1728px; height: 1402px; display: flex; flex-direction: column; background: #f3f2f1; flex: none; }
.titlebar { height: 34px; background: #3b3a39; color: #fff; display: flex; align-items: center; flex: none; position: relative; font-size: 12.500px; }
.qat { display: flex; gap: 15px; padding-left: 17px; }
.doc-title { position: absolute; left: 762px; top: 10px; }
.signin { margin-left: auto; margin-right: 10px; }
.avatar { margin-right: 30px; }
.winctl { display: flex; gap: 32px; padding-right: 16px; }

/* ribbon */
.ribbon { height: 126px; background: #fbfbfb; flex: none; position: relative; box-shadow: 0 2px 4px rgba(0, 0, 0, .14); z-index: 2; }
.menu { height: 36px; position: relative; font-size: 14px; }
.menu span { position: absolute; top: 7px; line-height: 17px; color: #323130; }
.m-archivo { left: 23px; }
.m-inicio { left: 107px; }
.m-insertar { left: 173px; }
.m-modelado { left: 252px; }
.m-ver { left: 346px; }
.m-optimizar { left: 397px; }
.m-ayuda { left: 490px; }
.menu .active::after { content: ""; display: block; height: 3px; background: #2f7562; margin-top: 4px; }
.share { position: absolute; left: 1615px; top: 4px; width: 107px; height: 24px; background: #2f7562; border-radius: 4px; color: #fff; font-size: 12.500px; display: flex; align-items: center; gap: 9px; padding: 0 7px; }
.share svg:last-child { margin-left: -2px; }
.groups { display: flex; height: 90px; }
.rgroup { display: flex; flex-direction: column; border-right: 1px solid #d2d0ce; height: 88px; position: relative; flex: none; }
.rbody { display: grid; height: 75px; padding-top: 6px; }
.rlabel { position: absolute; left: 0; right: 0; bottom: -3px; text-align: center; font-size: 10.500px; line-height: 13px; color: #605e5c; }
.ritem { display: flex; flex-direction: column; align-items: center; text-align: center; color: #484644; font-size: 12px; line-height: 16px; white-space: nowrap; }
.ritem svg { height: 32px; margin-bottom: 2px; flex: none; }
.ritem.dim { color: #c4c2c0; }
.chev { display: inline-block; width: 5px; height: 5px; border-right: 1px solid #333; border-bottom: 1px solid #333; transform: rotate(45deg); margin: 0 0 3px 2px; }
.chev.light { border-color: #c8c6c4; margin: 0; }
.g-clip { width: 163px; }
.g-datos { width: 433px; }
.g-datos .rbody { grid-template-columns: 48px 48px 105px 40px 56px 56px 64px; padding-left: 8px; }
.g-consultas { width: 139px; }
.g-consultas .rbody { grid-template-columns: 64px 59px; padding-left: 10px; }
.g-insertar { width: 222.500px; }
.g-insertar .rbody { grid-template-columns: 75px 61px 67px; padding-left: 10px; }
.g-calc { width: 105px; }
.g-calc .rbody { grid-template-columns: 44px 43px; padding-left: 8.500px; }
.g-conf { width: 110.500px; }
.g-conf .rbody { grid-template-columns: 1fr; }
.g-comp { width: 62.500px; }
.g-comp .rbody { grid-template-columns: 1fr; }
.g-copilot { width: 59.500px; }
.g-copilot .rbody { grid-template-columns: 1fr; }
.clip-body { display: flex; padding-left: 9px; color: #bebcba; font-size: 12px; }
.pegar { width: 40px; display: flex; flex-direction: column; align-items: center; }
.pegar span { margin-top: 2px; }
.clip-list { margin-left: 3px; margin-top: -6px; }
.clip-list li { display: flex; align-items: center; gap: 4px; height: 24px; }
.collapse { position: absolute; left: 1714px; top: 113px; }

/* main */
.main { flex: 1; display: flex; min-height: 0; }
.rail { width: 41px; flex: none; background: #f3f2f1; border-right: 1px solid #e1dfdd; }
.rail-item { height: 40px; display: flex; align-items: center; justify-content: center; }
.rail-item.on { box-shadow: inset 3px 0 0 #2f7562; }
.center { width: 1325px; flex: none; display: flex; flex-direction: column; border-right: 1px solid #d2d0ce; }
.work { flex: 1; display: flex; min-height: 0; background: #fff; }
.canvas { width: 1124px; flex: none; position: relative; background: #fff; border-right: 1px solid #8a8886; }

/* visuals */
.visual { position: absolute; display: block; }
.v-slicer { left: 1px; top: 1px; width: 240px; height: 197px; background: #0c2036; color: #fff; }
.sl-title { position: absolute; left: 11px; top: 3px; font: 700 9.500px/11px "Roboto", sans-serif; white-space: nowrap; transform: scaleX(.86); transform-origin: left; }
.sl-tools { position: absolute; right: 5px; top: 3px; }
.sl-list { padding: 15.500px 0 0 10px; }
.sl-list li { height: 19.320px; display: flex; align-items: center; }
.sl-list i { width: 10px; height: 10px; border: 1px solid #7f8b97; flex: none; margin-right: 7px; }
.sl-list span { font: 500 11px/14px "Roboto", sans-serif; white-space: nowrap; transform: scaleX(.82); transform-origin: left; }
.sl-list .off span { color: #a9b2bb; }
.sl-list .off i { border-color: #2d4055; }
.v-line1 { left: 246px; top: 0; }
.v-line2 { left: 246px; top: 195px; }
.v-pie { left: 0; top: 198px; width: 242px; height: 184px; background: #0d2037; padding: 0 5px 7px; }
.vt-html { position: absolute; left: 5px; top: 0; z-index: 1; width: 232px; padding: 2px 0 0 5px; font: 400 14px/16.500px "Roboto", sans-serif; letter-spacing: .35px; color: #252423; height: 36px; }
.pie-svg { display: block; background: #fff; }
.v-bar1 { left: 0; top: 382px; }
.v-bar2 { left: 419px; top: 382px; }
.v-bar1 svg, .v-bar2 svg { display: block; }
.v-gender { left: 876px; top: 194px; width: 248px; height: 438px; background: #25403f; padding: 5px 5px 0 6px; display: flex; flex-direction: column; color: #fff; }
.gcard { background: #fff; height: 176px; flex: none; }
.gcard svg { display: block; }
.range { padding: 16px 12px 0 12px; }
.range-head { display: flex; justify-content: space-between; align-items: center; font: 700 10px/14px "Roboto", sans-serif; padding-right: 4px; }
.range-inputs { display: flex; gap: 5px; margin-top: 4px; }
.range-inputs span { width: 65px; height: 23px; border: 1px solid #9fb0af; font: 400 11px/21px "Roboto", sans-serif; padding-left: 5px; }
.slider { position: relative; height: 5px; background: #8b8f8d; margin: 13px 5px 0 8px; border-top: 1px solid #6f7371; border-bottom: 1px solid #6f7371; }
.slider i { position: absolute; top: -9px; width: 21px; height: 22px; border-radius: 50%; background: #fff; border: 2px solid #666; }
.slider i:first-child { left: -6px; }
.slider i:last-child { right: -9px; }
.pager { margin-top: auto; display: flex; justify-content: space-between; padding: 0 0 4px 0; margin-left: -2px; }
.v-dots { left: 0; top: 633px; width: 1124px; border-top: 2px dotted #555; }
.vt { font: 400 14px "Roboto", sans-serif; fill: #252423; }
.grid path, .grid-p { fill: none; stroke: #c8c6c4; stroke-width: 1; stroke-dasharray: 1 3; }
.ax text { font: 400 10.500px "Roboto", sans-serif; fill: #605e5c; }
.ax.end text { text-anchor: end; }
.ax.mid text { text-anchor: middle; }
.axt { font: 500 10px "Roboto", sans-serif; fill: #252423; }
.axs { font: 400 12.500px "Roboto", sans-serif; fill: #252423; text-anchor: middle; }
.line1 { fill: none; stroke: #25403f; stroke-width: 2; stroke-linejoin: round; }
.line2 { fill: none; stroke: #1a3f6f; stroke-width: 2.600; stroke-linejoin: round; }
.lg { font: 400 10.500px "Roboto", sans-serif; fill: #605e5c; }
.lg2 { font: 400 12px "Roboto", sans-serif; fill: #605e5c; }
.lb { font: 400 11px "Roboto", sans-serif; fill: #605e5c; }
.lb.small { font-size: 10.500px; }
.lead { fill: none; stroke: #bdbbb9; stroke-width: 1; }
.bars1 rect { fill: #1a3f6f; stroke: #b9c6d6; stroke-width: .8; }
.bars2 rect { fill: #25403f; stroke: #c3cccb; stroke-width: .8; }

/* panes */
.pane-head { display: flex; align-items: center; height: 36px; }
.pane-head h2 { font-size: 16px; font-weight: 500; color: #252423; }
.filters { flex: 1; background: #fff; padding: 0 8px 0 9px; position: relative; }
.filters .pane-head { padding: 0 3px 0 2px; gap: 7px; margin-right: -2px; }
.eye { margin-left: auto; margin-right: 15px; }
.f-search { margin-top: 9px; width: 180px; height: 30px; border: 1px solid #b3b0ad; border-radius: 1px; display: flex; align-items: center; padding-left: 10px; gap: 12px; font-size: 12.500px; }
.filters::before { content: ""; position: absolute; left: 0; right: 0; top: 80px; border-top: 1px solid #c8c6c4; }
.f-sect { display: flex; justify-content: space-between; margin-top: 23px; font-size: 12px; line-height: 16px; color: #3b3a39; }
.f-sect b { font-weight: 400; padding-right: 4px; line-height: 12px; letter-spacing: 1px; }
.f-sect.second { margin-top: 27px; }
.f-card { margin-top: 9px; width: 184px; height: 45px; border: 1px solid #c8c6c4; border-radius: 2px; padding-left: 14px; line-height: 44px; font-size: 12.400px; white-space: nowrap; }
.f-sect.second + .f-card { margin-top: 8px; }
.viz { width: 180px; flex: none; border-right: 1px solid #d2d0ce; padding: 0 0 0 9px; font-size: 12px; }
.viz .pane-head { justify-content: space-between; padding-right: 5px; }
.data .pane-head { justify-content: space-between; padding-right: 6px; }
.viz-sub { line-height: 16px; margin-top: 2px; color: #323130; }
.viz-modes { display: flex; margin-top: 3px; height: 32px; }
.mode { width: 32px; height: 32px; display: flex; align-items: center; justify-content: center; }
.mode.on { background: #d2d0ce; border-radius: 1px; }
.mode + .mode { margin-left: 34px; }
.viz-rule { border-top: 1px solid #c8c6c4; margin: 12px 0 0 -9px; position: relative; }
.viz-rule i { position: absolute; left: 19px; top: -5px; width: 9px; height: 9px; background: #f3f2f1; border-left: 1px solid #c8c6c4; border-top: 1px solid #c8c6c4; transform: rotate(45deg); }
.viz-grid { display: grid; grid-template-columns: repeat(6, 20px); column-gap: 8px; row-gap: 8px; margin: 10px 0 0 2px; grid-auto-rows: 20px; }
.viz-grid svg { width: 20px; height: 20px; }
.more { grid-column: 1 / 2; letter-spacing: 3px; font-size: 13px; line-height: 10px; padding-left: 2px; margin-top: 0; }
.viz-rule2 { border-top: 1px solid #d2d0ce; margin: 7px 0 0 -9px; }
.well-label { margin: 10px 0 0 3px; line-height: 16px; color: #3b3a39; }
.well { margin: 6px 0 0 -5px; width: 170px; height: 28px; border: 1px dashed #c8c6c4; border-radius: 2px; background: #fff; padding-left: 11px; line-height: 26px; white-space: nowrap; font-size: 12.400px; }
.well-title { margin: 10px 0 0 3px; font-weight: 700; line-height: 16px; color: #484644; }
.toggle-row { display: flex; justify-content: space-between; margin: 9px 0 0 3px; width: 146px; line-height: 16px; color: #3b3a39; white-space: nowrap; }
.toggle-row.two { white-space: normal; margin-top: 11px; }
.toggle-row.two span { width: 110px; }
.tg { width: 32px; height: 16px; border: 1px solid #484644; border-radius: 8px; flex: none; position: relative; background: #fff; }
.tg::after { content: ""; position: absolute; left: 4px; top: 3px; width: 8px; height: 8px; border-radius: 50%; background: #605e5c; }
.tg-on { background: #2f7562; border-color: #2f7562; }
.tg-on::after { left: 19px; top: 3px; background: #fff; }
.tg-on svg { position: absolute; left: 5px; top: 3px; }
.well.w2 { margin-top: 10px; height: 26px; line-height: 24px; padding-left: 9px; }
.data { width: 181px; flex: none; padding-left: 10px; font-size: 12px; position: relative; }
.d-search { margin: 9px 0 0 -4px; width: 171px; height: 24px; border: 1px solid #c8c6c4; border-bottom-color: #605e5c; border-radius: 3px; background: #fff; display: flex; align-items: center; gap: 8px; padding-left: 11px; font-size: 12.500px; color: #605e5c; }
.d-list { margin-top: 9px; margin-left: -1px; }
.d-list li { display: flex; align-items: center; height: 24px; white-space: nowrap; color: #484644; letter-spacing: -.08px; }
.tree { margin-left: 8px; margin-right: 7px; flex: none; }
.tbl { margin-right: 5px; flex: none; width: 14px; height: 14px; }

/* page tabs */
.pagetabs { height: 35px; display: grid; grid-template-columns: 128px 107px 77px 111px 157px 120px 109px 39px; flex: none; background: #f3f2f1; border-bottom: 1px solid #d2d0ce; font-size: 12px; box-sizing: content-box; }
.tab-tools { position: relative; }
.dev { position: absolute; top: 5px; left: 12px; }
.dev + .dev { left: 60px; top: 4px; }
.dev.on + .dev { left: 60px; }
.tab-tools::before { content: ""; position: absolute; left: 10px; top: 28px; width: 24px; height: 3px; border-radius: 2px; background: #2f7562; }
.arr { position: absolute; top: 13px; left: 93px; }
.arr + .arr { left: 115px; }
.tab { background: #fff; border-left: 1px solid #d2d0ce; display: flex; align-items: center; justify-content: center; position: relative; color: #323130; }
.tab.current { box-shadow: inset 0 -4px 0 #2f7562; -webkit-text-stroke: .3px #252423; color: #252423; font-size: 12.200px; }
.tab em { position: absolute; right: 4px; top: 2px; font-weight: 400; font-size: 11px; line-height: 13px; -webkit-text-stroke: 0; }
.tab-add { background: #2f7562; display: flex; align-items: center; justify-content: center; }

/* status */
.status { height: 23px; flex: none; background: #f3f2f1; display: flex; align-items: center; justify-content: space-between; padding: 0 17px 1px 4px; font-size: 12px; color: #484644; }
.zoomer { display: flex; align-items: center; }
.zm { width: 3px; height: 3px; background: #484644; margin-right: 4px; }
.ztrack { width: 100px; height: 1px; background: #605e5c; position: relative; margin-right: 5px; }
.ztrack b { position: absolute; left: 42px; top: -7px; width: 4px; height: 15px; background: #605e5c; }
.ztrack u { position: absolute; left: 50px; top: -3px; width: 1px; height: 7px; background: #605e5c; }
.zpct { margin: 0 17px 0 12px; }
.zfit { display: block; }
.taskbar { height: 11px; flex: none; background: #26241f; border-top: 1px solid #000; position: relative; overflow: hidden; }
.tk { position: absolute; top: 6px; }
.tk1 { left: 1196px; width: 18px; height: 18px; border-radius: 50%; background: #9a9a9a; }
.tk2 { left: 1282px; width: 10px; height: 10px; border-radius: 50%; background: #e0393e; }
.tk3 { left: 1494px; width: 18px; height: 18px; border-radius: 50%; background: #9a9a9a; }
.tk4 { left: 1525px; width: 36px; height: 20px; border-radius: 4px; background: #383632; }

/* right edge: part of whatever lies behind the window */
.edge { flex: 1; display: flex; flex-direction: column; min-width: 0; overflow: hidden; }
.e1 { height: 321px; background: #1c1c1c; }
.e2 { height: 39px; background: #232323; border-top: 1px solid #3b3b3b; }
.e3 { height: 45px; background: #333; }
.e4 { height: 61px; background: #141414; }
.e5 { height: 384px; background: #fff; padding-top: 98px; }
.e5 small { display: block; font: 400 5px/8px "Liberation Serif", serif; color: #8a8886; white-space: nowrap; margin-bottom: 12px; }
.e6 { height: 30px; background: #333; }
.e7 { flex: 1; background: #1a1a1a; }
```

FILE: charts.js
```js
// Builds the two dense daily time series of the report from a seeded generator.
(function () {
  var seed = 20240611;
  function rnd() {
    seed = (seed * 1664525 + 1013904223) >>> 0;
    return seed / 4294967296;
  }
  function lerpTable(tab, x, col) {
    for (var i = 1; i < tab.length; i++) {
      if (x <= tab[i][0]) {
        var a = tab[i - 1], b = tab[i], t = (x - a[0]) / (b[0] - a[0] || 1);
        return a[col] + (b[col] - a[col]) * t;
      }
    }
    return tab[tab.length - 1][col];
  }

  var band = [
    [323, 274, 300], [332, 268, 296], [360, 274, 296], [400, 280, 300], [440, 278, 300],
    [500, 280, 302], [555, 283, 306], [610, 276, 300], [670, 281, 302], [725, 282, 302],
    [785, 291, 307], [840, 293, 308], [880, 296, 310], [900, 293, 311], [910, 303, 316],
    [960, 294, 312], [1015, 297, 311], [1070, 300, 314], [1075, 276, 296], [1100, 276, 296],
    [1112, 296, 306], [1125, 298, 316], [1132, 284, 312], [1149, 292, 306]
  ];
  var spikes = [
    [327, 255], [332, 202], [335, 228], [414, 230], [442, 238], [455, 216], [460, 232],
    [464, 242], [478, 233], [492.5, 224], [509, 224], [556, 255], [566, 252], [589, 252],
    [613, 258], [648, 251], [739.6, 194], [780, 272], [802, 268], [863.5, 277], [974, 274],
    [1074, 249], [1083, 238], [1091, 254], [1103, 258], [1132.5, 265]
  ];
  var d = "M323 300";
  var next = 0, i = 0;
  // a slow random walk makes the two edges of the band uneven
  var topWalk = 0, lowWalk = 0;
  for (var x = 323; x <= 1149; x += 0.3, i++) {
    topWalk += (rnd() - 0.5) * 3 - topWalk * 0.03;
    lowWalk += (rnd() - 0.5) * 3 - lowWalk * 0.03;
    var up = lerpTable(band, x, 1) + topWalk;
    var lo = lerpTable(band, x, 2) + lowWalk;
    var y = i % 2 ? up + rnd() * 5 : lo - rnd() * 5;
    var r = rnd();
    if (r < 0.03) y = up - rnd() * 20;
    else if (r < 0.05) y = lo + rnd() * 8;
    if (next < spikes.length && x >= spikes[next][0]) {
      y = spikes[next][1];
      next++;
    }
    d += "L" + x.toFixed(2) + " " + y.toFixed(1);
  }
  document.getElementById("series1").setAttribute("d", d);

  var a = [[856,985],[862,920],[872,870],[900,880],[930,890],[960,905],[1000,890],[1050,885],[1080,915],[1095,960],[1103,990],[1112,880],[1140,860],[1180,880],[1240,885],[1300,895],[1330,935],[1355,995],[1370,830],[1385,810],[1420,835],[1500,850]];
  var b = [[-110,880],[0,915],[20,925],[40,1005],[52,810],[65,790],[100,810],[160,850],[210,850],[260,880],[290,960],[302,1015],[315,810],[360,795],[380,860],[410,825],[430,900],[460,840],[500,885],[540,930],[562,1000],[585,810],[600,790],[640,830],[680,860],[780,880],[810,930],[828,1015]];
  var center = [];
  a.forEach(function (p) { center.push([p[0] / 2.613, 155 + p[1] / 3]); });
  b.forEach(function (p) { center.push([600 + p[0] / 2.751, 155 + p[1] / 3]); });
  var d2 = "", x2, walk = 0;
  for (x2 = 327.5, i = 0; x2 <= 901.5; x2 += 0.4, i++) {
    walk += (rnd() - 0.5) * 3.4 - walk * 0.05;
    var c = lerpTable(center, x2, 1);
    var n = (i % 2 ? 4.5 : -4.5) + walk + (rnd() - 0.5) * 3;
    var q = rnd();
    if (q < 0.008) n += 8 + 14 * rnd();
    else if (q < 0.025) n -= 6 * rnd();
    if (x2 < 331 || x2 > 899) n = 0;
    d2 += (i ? "L" : "M") + x2.toFixed(2) + " " + (c + n).toFixed(1);
  }
  document.getElementById("series2").setAttribute("d", d2);
})();
```
